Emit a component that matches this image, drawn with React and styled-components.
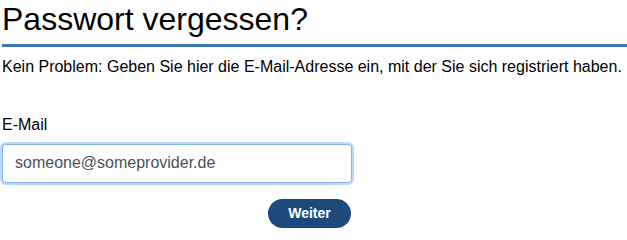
import React from "react";
import styled, { createGlobalStyle } from "styled-components";

const GlobalStyle = createGlobalStyle`
  body {
    margin: 0;
    background: #fff;
    font-family: "Liberation Sans", Arial, sans-serif;
    color: #000;
  }
`;

const Page = styled.div`
  padding: 1px 0 0 2px;
`;

const Title = styled.h1`
  margin: 0;
  padding-bottom: 6px;
  font-size: 32px;
  font-weight: normal;
  line-height: 1.15;
  border-bottom: 3px solid #3a77b4;
`;

const Intro = styled.p`
  margin: 11px 0 0;
  font-size: 16px;
  line-height: 1.15;
`;

const Form = styled.form`
  width: 350px;
  margin-top: 40px;
  display: flex;
  flex-direction: column;
`;

const Label = styled.label`
  font-size: 16px;
  line-height: 1.15;
`;

const Input = styled.input`
  box-sizing: border-box;
  margin-top: 9px;
  height: 39px;
  width: 100%;
  padding: 0 12px;
  font-family: "Liberation Sans", Arial, sans-serif;
  font-size: 16px;
  color: #495057;
  border: 1px solid #80b4f0;
  border-radius: 4px;
  box-shadow: 0 0 0 2px #bcd8fb;
  outline: none;
`;

const Actions = styled.div`
  display: flex;
  justify-content: flex-end;
  margin-top: 16px;
`;

const Button = styled.button`
  width: 83px;
  height: 29px;
  margin-right: 1px;
  border: none;
  border-radius: 15px;
  background: #1c4a7c;
  color: #fff;
  font-family: "Liberation Sans", Arial, sans-serif;
  font-size: 14px;
  font-weight: bold;
  cursor: pointer;
`;

export default function App() {
  // Cursor ans Ende setzen, wie im Screenshot
  const moveCaretToEnd = (e) => {
    const len = e.target.value.length;
    e.target.setSelectionRange(len, len);
  };

  return (
    <Page>
      <GlobalStyle />
      <Title>Passwort vergessen?</Title>
      <Intro>
        Kein Problem: Geben Sie hier die E-Mail-Adresse ein, mit der Sie sich
        registriert haben.
      </Intro>
      <Form onSubmit={(e) => e.preventDefault()}>
        <Label htmlFor="email">E-Mail</Label>
        <Input
          id="email"
          type="text"
          inputMode="email"
          defaultValue="someone@someprovider.de"
          autoFocus
          onFocus={moveCaretToEnd}
        />
        <Actions>
          <Button type="submit">Weiter</Button>
        </Actions>
      </Form>
    </Page>
  );
}
